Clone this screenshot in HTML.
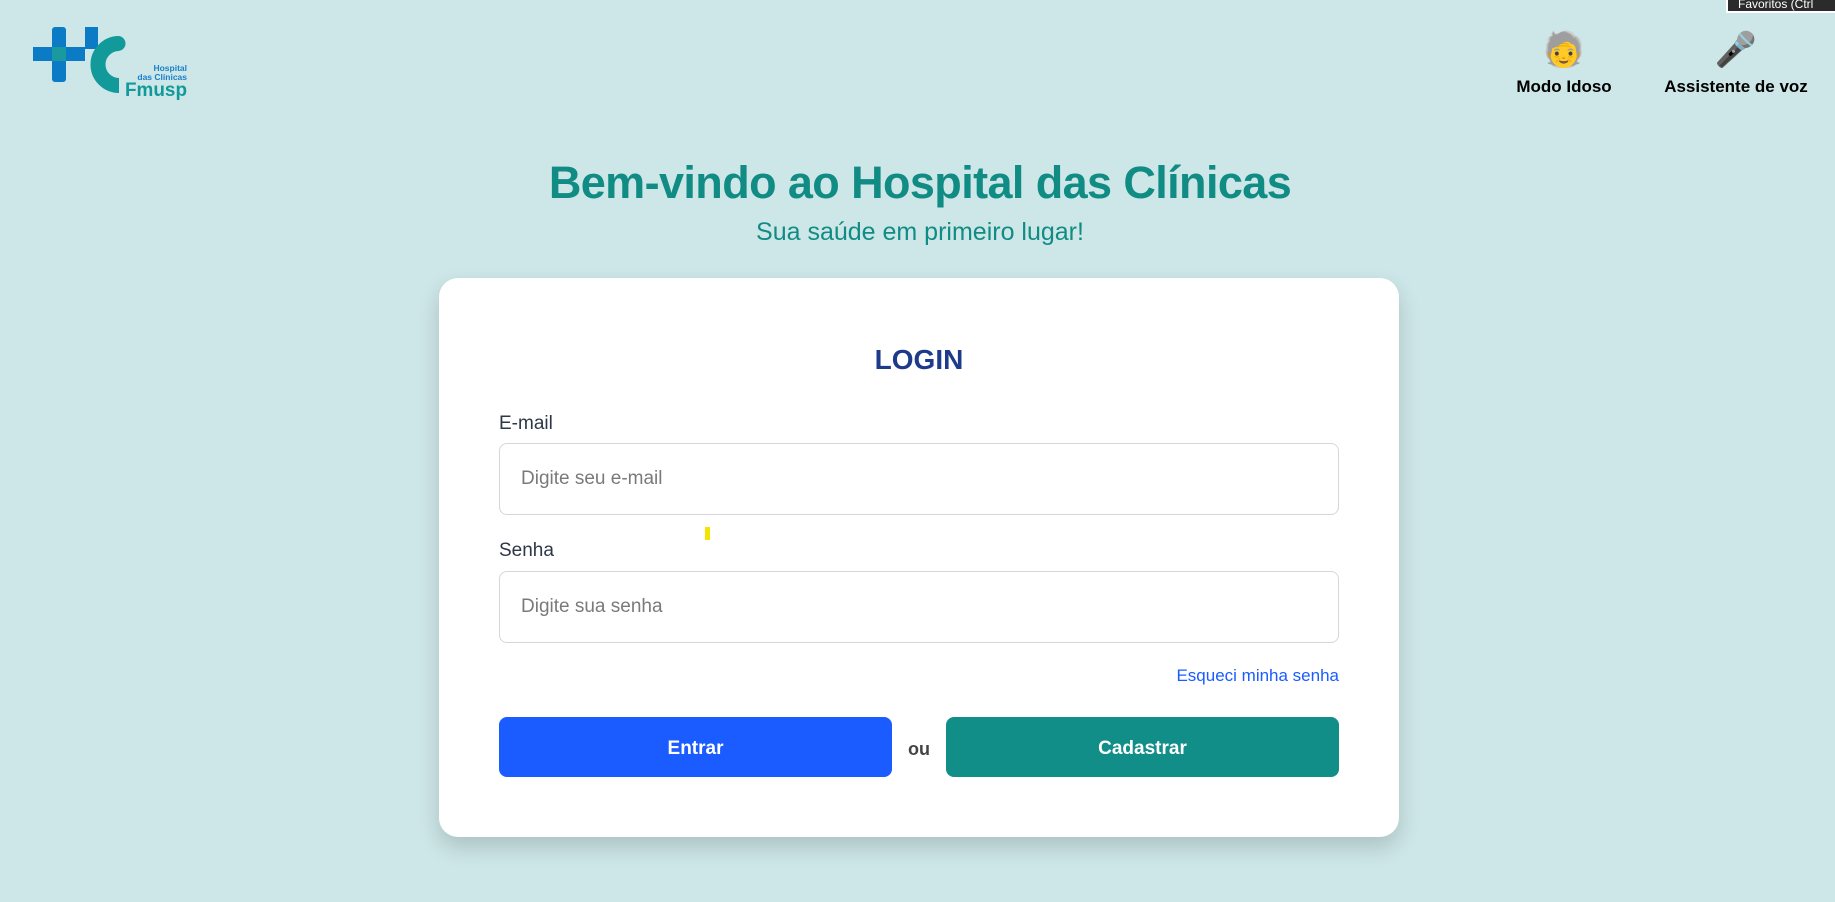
<!DOCTYPE html>
<html><head><meta charset="utf-8"><style>
*{margin:0;padding:0;box-sizing:border-box}
body{width:1835px;height:902px;background:#cde6e7;font-family:"Liberation Sans",sans-serif;position:relative;overflow:hidden}
.abs{position:absolute}
.title{left:0;width:1840px;text-align:center;top:157px;font-size:45px;font-weight:bold;color:#118c84;letter-spacing:-0.6px}
.sub{left:0;width:1840px;text-align:center;top:218px;font-size:25px;color:#118c84}
.card{left:439px;top:278px;width:960px;height:559px;background:#fff;border-radius:19px;box-shadow:0 10px 22px rgba(0,0,0,0.16)}
.login{left:0;width:100%;text-align:center;top:66px;font-size:28px;font-weight:bold;color:#1e3a8a}
.lbl{left:60px;font-size:19px;color:#2d3748}
.inp{left:60px;width:840px;height:72px;border:1px solid #d3d7dd;border-radius:8px;font-size:19px;color:#7a7a7a;padding:24px 0 0 21px}
.btn{top:439px;height:60px;width:393px;border-radius:8px;color:#fff;font-weight:bold;font-size:19px;text-align:center;line-height:63px}
.top{font-size:17px;font-weight:bold;color:#000;text-align:center}
.emo{font-size:34px;text-align:center;line-height:40px}
</style></head><body>
<svg class="abs" style="left:0;top:0" width="200" height="110" viewBox="0 0 200 110">
<rect x="52" y="27" width="14" height="55" rx="3" fill="#0c7bc6"/>
<rect x="85" y="27" width="13" height="22" fill="#0c7bc6"/>
<rect x="33" y="47" width="52" height="14" fill="#0c7bc6"/>
<rect x="52" y="47" width="14" height="14" fill="#1a9a9e"/>
<path d="M119,43.5 A21,21 0 1 0 119,85.5" stroke="#12999a" stroke-width="15" fill="none"/>
<circle cx="118" cy="43.5" r="7.5" fill="#12999a"/>
<text x="187" y="71" text-anchor="end" font-family="Liberation Sans" font-size="8.5" font-weight="bold" fill="#1a80c8">Hospital</text>
<text x="187" y="80" text-anchor="end" font-family="Liberation Sans" font-size="8.5" font-weight="bold" fill="#1a80c8">das Clínicas</text>
<text x="187" y="96" text-anchor="end" font-family="Liberation Sans" font-size="19" font-weight="bold" fill="#12999a" textLength="62" lengthAdjust="spacingAndGlyphs">Fmusp</text>
</svg>
<div class="abs" style="left:1726px;top:0;width:109px;height:13px;background:#2b2b2b;border:2px solid #fff;border-top:none;border-right:none;color:#fff;font-size:12px;line-height:8px;padding-left:10px;overflow:hidden">Favoritos (Ctrl</div>
<div class="abs emo" style="left:1534px;top:30px;width:60px">🧓</div>
<div class="abs top" style="left:1494px;top:77px;width:140px">Modo Idoso</div>
<div class="abs emo" style="left:1706px;top:30px;width:60px">🎤</div>
<div class="abs top" style="left:1646px;top:77px;width:180px">Assistente de voz</div>
<div class="abs title">Bem-vindo ao Hospital das Clínicas</div>
<div class="abs sub">Sua saúde em primeiro lugar!</div>
<div class="abs card">
<div class="abs login">LOGIN</div>
<div class="abs lbl" style="top:135px">E-mail</div>
<div class="abs inp" style="top:165px">Digite seu e-mail</div>
<div class="abs lbl" style="top:262px">Senha</div>
<div class="abs inp" style="top:293px">Digite sua senha</div>
<div class="abs" style="right:60px;top:388px;font-size:17px;color:#1a5cff">Esqueci minha senha</div>
<div class="abs btn" style="left:60px;background:#1a5cff">Entrar</div>
<div class="abs" style="left:466px;top:441px;width:28px;line-height:60px;text-align:center;font-weight:bold;font-size:18px;color:#444">ou</div>
<div class="abs btn" style="left:507px;background:#118e88">Cadastrar</div>
</div>
<div class="abs" style="left:705px;top:527px;width:5px;height:13px;background:#f5e400"></div>
</body></html>
